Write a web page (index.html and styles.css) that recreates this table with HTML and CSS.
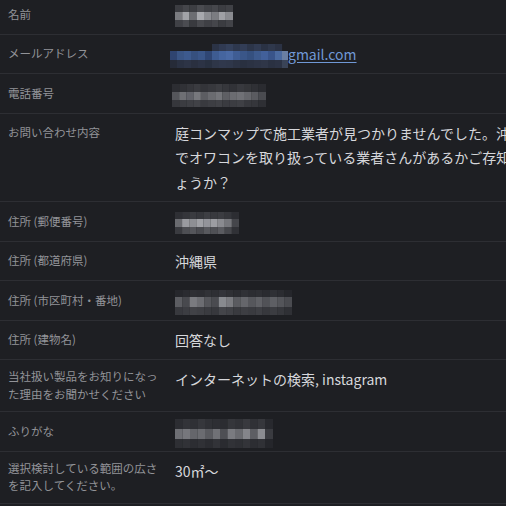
FILE: index.html
```html
<!DOCTYPE html>
<html lang="ja">
<head>
<meta charset="utf-8">
<title>お問い合わせ詳細</title>
<link rel="stylesheet" href="styles.css">
</head>
<body>
<main class="sheet">
  <div class="row">
    <div class="label">名前</div>
    <div class="value">
      <svg class="blur" width="58" height="22" viewBox="0 0 58 22">
        <g><rect x="0" y="0" width="7.3" height="7" fill="#3b3c41"/><rect x="7.25" y="0" width="7.3" height="7" fill="#45464b"/><rect x="14.5" y="0" width="7.3" height="7" fill="#3d3e43"/><rect x="21.75" y="0" width="7.3" height="7" fill="#4a4b50"/><rect x="29" y="0" width="7.3" height="7" fill="#414247"/><rect x="36.25" y="0" width="7.3" height="7" fill="#46474c"/><rect x="43.5" y="0" width="7.3" height="7" fill="#3c3d42"/><rect x="50.75" y="0" width="7.3" height="7" fill="#404146"/></g>
        <g><rect x="0" y="7" width="7.3" height="8" fill="#7a7b80"/><rect x="7.25" y="7" width="7.3" height="8" fill="#a2a3a8"/><rect x="14.5" y="7" width="7.3" height="8" fill="#6c6d72"/><rect x="21.75" y="7" width="7.3" height="8" fill="#a8a9ae"/><rect x="29" y="7" width="7.3" height="8" fill="#8c8d92"/><rect x="36.25" y="7" width="7.3" height="8" fill="#7b7c81"/><rect x="43.5" y="7" width="7.3" height="8" fill="#9fa0a5"/><rect x="50.75" y="7" width="7.3" height="8" fill="#8a8b90"/></g>
        <g><rect x="0" y="15" width="7.3" height="7" fill="#404146"/><rect x="7.25" y="15" width="7.3" height="7" fill="#4b4c51"/><rect x="14.5" y="15" width="7.3" height="7" fill="#393a3f"/><rect x="21.75" y="15" width="7.3" height="7" fill="#48494e"/><rect x="29" y="15" width="7.3" height="7" fill="#3f4045"/><rect x="36.25" y="15" width="7.3" height="7" fill="#45464b"/><rect x="43.5" y="15" width="7.3" height="7" fill="#3b3c41"/><rect x="50.75" y="15" width="7.3" height="7" fill="#424348"/></g>
      </svg>
    </div>
  </div>

  <div class="row">
    <div class="label">メールアドレス</div>
    <div class="value">
      <svg class="blur blur-left" width="118" height="24" viewBox="0 0 118 24">
        <g><rect x="42" y="0" width="7.1" height="7" fill="#2b3346"/><rect x="49" y="0" width="7.1" height="7" fill="#303a52"/><rect x="56" y="0" width="7.1" height="7" fill="#34405a"/><rect x="63" y="0" width="7.1" height="7" fill="#2e384e"/><rect x="70" y="0" width="7.1" height="7" fill="#323d56"/><rect x="77" y="0" width="7.1" height="7" fill="#2c3549"/><rect x="84" y="0" width="7.1" height="7" fill="#313b52"/><rect x="91" y="0" width="7.1" height="7" fill="#2a3244"/><rect x="98" y="0" width="7.1" height="7" fill="#2f384c"/><rect x="105" y="0" width="7.1" height="7" fill="#2b3244"/></g>
        <g><rect x="0" y="7" width="7.1" height="9" fill="#2f4470"/><rect x="7" y="7" width="7.1" height="9" fill="#3a5585"/><rect x="14" y="7" width="7.1" height="9" fill="#3d5a8e"/><rect x="21" y="7" width="7.1" height="9" fill="#36507f"/><rect x="28" y="7" width="7.1" height="9" fill="#3a5689"/><rect x="35" y="7" width="7.1" height="9" fill="#2f4674"/><rect x="42" y="7" width="7.1" height="9" fill="#3e5c92"/><rect x="49" y="7" width="7.1" height="9" fill="#45659f"/><rect x="56" y="7" width="7.1" height="9" fill="#4a6aa5"/><rect x="63" y="7" width="7.1" height="9" fill="#3f5d94"/><rect x="70" y="7" width="7.1" height="9" fill="#3a5688"/><rect x="77" y="7" width="7.1" height="9" fill="#35507f"/><rect x="84" y="7" width="7.1" height="9" fill="#3d5a8d"/><rect x="91" y="7" width="7.1" height="9" fill="#42609a"/><rect x="98" y="7" width="7.1" height="9" fill="#39548a"/><rect x="105" y="7" width="7.1" height="9" fill="#4b6aa0"/><rect x="112" y="7" width="6" height="9" fill="#6a7fa3"/></g>
        <g><rect x="0" y="16" width="7.1" height="8" fill="#262b38"/><rect x="7" y="16" width="7.1" height="8" fill="#2a3142"/><rect x="14" y="16" width="7.1" height="8" fill="#2d3446"/><rect x="21" y="16" width="7.1" height="8" fill="#2a3040"/><rect x="28" y="16" width="7.1" height="8" fill="#2c3345"/><rect x="35" y="16" width="7.1" height="8" fill="#283040"/><rect x="42" y="16" width="7.1" height="8" fill="#2e3648"/><rect x="49" y="16" width="7.1" height="8" fill="#30384c"/><rect x="56" y="16" width="7.1" height="8" fill="#2f374a"/><rect x="63" y="16" width="7.1" height="8" fill="#2c3344"/><rect x="70" y="16" width="7.1" height="8" fill="#293040"/><rect x="77" y="16" width="7.1" height="8" fill="#2b3243"/><rect x="84" y="16" width="7.1" height="8" fill="#2d3446"/><rect x="91" y="16" width="7.1" height="8" fill="#2f3648"/><rect x="98" y="16" width="7.1" height="8" fill="#2a3142"/><rect x="105" y="16" width="7.1" height="8" fill="#2c3345"/><rect x="112" y="16" width="6" height="8" fill="#3a4458"/></g>
      </svg><a class="link" href="#">gmail.com</a>
    </div>
  </div>

  <div class="row">
    <div class="label">電話番号</div>
    <div class="value">
      <svg class="blur blur-phone" width="94" height="23" viewBox="0 0 94 23">
        <g><rect x="0" y="0" width="7.3" height="8" fill="#2c2d32"/><rect x="7.2" y="0" width="7.3" height="8" fill="#303136"/><rect x="14.4" y="0" width="7.3" height="8" fill="#35363b"/><rect x="21.6" y="0" width="7.3" height="8" fill="#3a3b40"/><rect x="28.8" y="0" width="7.3" height="8" fill="#333439"/><rect x="36" y="0" width="7.3" height="8" fill="#37383d"/><rect x="43.2" y="0" width="7.3" height="8" fill="#3c3d42"/><rect x="50.4" y="0" width="7.3" height="8" fill="#36373c"/><rect x="57.6" y="0" width="7.3" height="8" fill="#313237"/><rect x="64.8" y="0" width="7.3" height="8" fill="#38393e"/><rect x="72" y="0" width="7.3" height="8" fill="#343539"/><rect x="79.2" y="0" width="7.3" height="8" fill="#2f3035"/><rect x="86.4" y="0" width="7.6" height="8" fill="#2a2b30"/></g>
        <g><rect x="0" y="8" width="7.3" height="8" fill="#55565b"/><rect x="7.2" y="8" width="7.3" height="8" fill="#6e6f74"/><rect x="14.4" y="8" width="7.3" height="8" fill="#62636a"/><rect x="21.6" y="8" width="7.3" height="8" fill="#77787d"/><rect x="28.8" y="8" width="7.3" height="8" fill="#5c5d62"/><rect x="36" y="8" width="7.3" height="8" fill="#6a6b70"/><rect x="43.2" y="8" width="7.3" height="8" fill="#74757a"/><rect x="50.4" y="8" width="7.3" height="8" fill="#5e5f64"/><rect x="57.6" y="8" width="7.3" height="8" fill="#6b6c71"/><rect x="64.8" y="8" width="7.3" height="8" fill="#707176"/><rect x="72" y="8" width="7.3" height="8" fill="#66676c"/><rect x="79.2" y="8" width="7.3" height="8" fill="#5a5b60"/><rect x="86.4" y="8" width="7.6" height="8" fill="#4a4b50"/></g>
        <g><rect x="0" y="16" width="7.3" height="7" fill="#36373c"/><rect x="7.2" y="16" width="7.3" height="7" fill="#3b3c41"/><rect x="14.4" y="16" width="7.3" height="7" fill="#3e3f44"/><rect x="21.6" y="16" width="7.3" height="7" fill="#414247"/><rect x="28.8" y="16" width="7.3" height="7" fill="#393a3f"/><rect x="36" y="16" width="7.3" height="7" fill="#3d3e43"/><rect x="43.2" y="16" width="7.3" height="7" fill="#404146"/><rect x="50.4" y="16" width="7.3" height="7" fill="#3a3b40"/><rect x="57.6" y="16" width="7.3" height="7" fill="#3c3d42"/><rect x="64.8" y="16" width="7.3" height="7" fill="#3f4045"/><rect x="72" y="16" width="7.3" height="7" fill="#37383d"/><rect x="79.2" y="16" width="7.3" height="7" fill="#35363b"/><rect x="86.4" y="16" width="7.6" height="7" fill="#2e2f34"/></g>
      </svg>
    </div>
  </div>

  <div class="row">
    <div class="label label-top">お問い合わせ内容</div>
    <div class="value">庭コンマップで施工業者が見つかりませんでした。沖縄県<br>でオワコンを取り扱っている業者さんがあるかご存知でし<br>ょうか？</div>
  </div>

  <div class="row">
    <div class="label">住所 (郵便番号)</div>
    <div class="value">
      <svg class="blur" width="64" height="22" viewBox="0 0 64 22">
        <g><rect x="0" y="0" width="7.2" height="7" fill="#2e2f34"/><rect x="7.1" y="0" width="7.2" height="7" fill="#34353a"/><rect x="14.2" y="0" width="7.2" height="7" fill="#3a3b40"/><rect x="21.3" y="0" width="7.2" height="7" fill="#36373c"/><rect x="28.4" y="0" width="7.2" height="7" fill="#3d3e43"/><rect x="35.5" y="0" width="7.2" height="7" fill="#38393e"/><rect x="42.6" y="0" width="7.2" height="7" fill="#3b3c41"/><rect x="49.7" y="0" width="7.2" height="7" fill="#35363b"/><rect x="56.8" y="0" width="7.2" height="7" fill="#2c2d32"/></g>
        <g><rect x="0" y="7" width="7.2" height="8" fill="#6a6b70"/><rect x="7.1" y="7" width="7.2" height="8" fill="#9a9ba0"/><rect x="14.2" y="7" width="7.2" height="8" fill="#8e8f94"/><rect x="21.3" y="7" width="7.2" height="8" fill="#a0a1a6"/><rect x="28.4" y="7" width="7.2" height="8" fill="#93949a"/><rect x="35.5" y="7" width="7.2" height="8" fill="#9c9da2"/><rect x="42.6" y="7" width="7.2" height="8" fill="#8a8b90"/><rect x="49.7" y="7" width="7.2" height="8" fill="#76777c"/><rect x="56.8" y="7" width="7.2" height="8" fill="#45464b"/></g>
        <g><rect x="0" y="15" width="7.2" height="7" fill="#3a3b40"/><rect x="7.1" y="15" width="7.2" height="7" fill="#4e4f54"/><rect x="14.2" y="15" width="7.2" height="7" fill="#55565b"/><rect x="21.3" y="15" width="7.2" height="7" fill="#4a4b50"/><rect x="28.4" y="15" width="7.2" height="7" fill="#58595e"/><rect x="35.5" y="15" width="7.2" height="7" fill="#4f5055"/><rect x="42.6" y="15" width="7.2" height="7" fill="#5a5b60"/><rect x="49.7" y="15" width="7.2" height="7" fill="#46474c"/><rect x="56.8" y="15" width="7.2" height="7" fill="#303136"/></g>
      </svg>
    </div>
  </div>

  <div class="row">
    <div class="label">住所 (都道府県)</div>
    <div class="value">沖縄県</div>
  </div>

  <div class="row">
    <div class="label">住所 (市区町村・番地)</div>
    <div class="value">
      <svg class="blur" width="117" height="25" viewBox="0 0 117 25">
        <g><rect x="0" y="0" width="7.4" height="7" fill="#26272c"/><rect x="7.3" y="0" width="7.4" height="7" fill="#2a2b30"/><rect x="14.6" y="0" width="7.4" height="7" fill="#2e2f34"/><rect x="21.9" y="0" width="7.4" height="7" fill="#2c2d32"/><rect x="29.2" y="0" width="7.4" height="7" fill="#313237"/><rect x="36.5" y="0" width="7.4" height="7" fill="#2e2f34"/><rect x="43.8" y="0" width="7.4" height="7" fill="#33343a"/><rect x="51.1" y="0" width="7.4" height="7" fill="#2f3035"/><rect x="58.4" y="0" width="7.4" height="7" fill="#2b2c31"/><rect x="65.7" y="0" width="7.4" height="7" fill="#303136"/><rect x="73" y="0" width="7.4" height="7" fill="#2c2d32"/><rect x="80.3" y="0" width="7.4" height="7" fill="#2e2f34"/><rect x="87.6" y="0" width="7.4" height="7" fill="#2a2b30"/><rect x="94.9" y="0" width="7.4" height="7" fill="#2f3035"/><rect x="102.2" y="0" width="7.4" height="7" fill="#2b2c31"/><rect x="109.5" y="0" width="7.5" height="7" fill="#25262b"/></g>
        <g><rect x="0" y="7" width="7.4" height="10" fill="#5c5d62"/><rect x="7.3" y="7" width="7.4" height="10" fill="#48494e"/><rect x="14.6" y="7" width="7.4" height="10" fill="#7a7b80"/><rect x="21.9" y="7" width="7.4" height="10" fill="#6c6d72"/><rect x="29.2" y="7" width="7.4" height="10" fill="#55565b"/><rect x="36.5" y="7" width="7.4" height="10" fill="#4a4b50"/><rect x="43.8" y="7" width="7.4" height="10" fill="#888a8f"/><rect x="51.1" y="7" width="7.4" height="10" fill="#7a7b80"/><rect x="58.4" y="7" width="7.4" height="10" fill="#5a5b60"/><rect x="65.7" y="7" width="7.4" height="10" fill="#65666b"/><rect x="73" y="7" width="7.4" height="10" fill="#56575c"/><rect x="80.3" y="7" width="7.4" height="10" fill="#606166"/><rect x="87.6" y="7" width="7.4" height="10" fill="#515257"/><rect x="94.9" y="7" width="7.4" height="10" fill="#5e5f64"/><rect x="102.2" y="7" width="7.4" height="10" fill="#54555a"/><rect x="109.5" y="7" width="7.5" height="10" fill="#4a4b50"/></g>
        <g><rect x="0" y="17" width="7.4" height="8" fill="#38393e"/><rect x="7.3" y="17" width="7.4" height="8" fill="#3c3d42"/><rect x="14.6" y="17" width="7.4" height="8" fill="#414247"/><rect x="21.9" y="17" width="7.4" height="8" fill="#3e3f44"/><rect x="29.2" y="17" width="7.4" height="8" fill="#3a3b40"/><rect x="36.5" y="17" width="7.4" height="8" fill="#37383d"/><rect x="43.8" y="17" width="7.4" height="8" fill="#44454a"/><rect x="51.1" y="17" width="7.4" height="8" fill="#404146"/><rect x="58.4" y="17" width="7.4" height="8" fill="#393a3f"/><rect x="65.7" y="17" width="7.4" height="8" fill="#3d3e43"/><rect x="73" y="17" width="7.4" height="8" fill="#3a3b40"/><rect x="80.3" y="17" width="7.4" height="8" fill="#3e3f44"/><rect x="87.6" y="17" width="7.4" height="8" fill="#37383d"/><rect x="94.9" y="17" width="7.4" height="8" fill="#3b3c41"/><rect x="102.2" y="17" width="7.4" height="8" fill="#36373c"/><rect x="109.5" y="17" width="7.5" height="8" fill="#2f3035"/></g>
      </svg>
    </div>
  </div>

  <div class="row">
    <div class="label">住所 (建物名)</div>
    <div class="value">回答なし</div>
  </div>

  <div class="row">
    <div class="label">当社扱い製品をお知りになった理由をお聞かせください</div>
    <div class="value">インターネットの検索, instagram</div>
  </div>

  <div class="row">
    <div class="label">ふりがな</div>
    <div class="value">
      <svg class="blur" width="98" height="29" viewBox="0 0 98 29">
        <g><rect x="0" y="0" width="7.6" height="10" fill="#2c2d32"/><rect x="7.5" y="0" width="7.6" height="10" fill="#323338"/><rect x="15" y="0" width="7.6" height="10" fill="#2f3035"/><rect x="22.5" y="0" width="7.6" height="10" fill="#36373c"/><rect x="30" y="0" width="7.6" height="10" fill="#303136"/><rect x="37.5" y="0" width="7.6" height="10" fill="#2d2e33"/><rect x="45" y="0" width="7.6" height="10" fill="#2b2c31"/><rect x="52.5" y="0" width="7.6" height="10" fill="#35363b"/><rect x="60" y="0" width="7.6" height="10" fill="#313237"/><rect x="67.5" y="0" width="7.6" height="10" fill="#38393e"/><rect x="75" y="0" width="7.6" height="10" fill="#303136"/><rect x="82.5" y="0" width="7.6" height="10" fill="#36373c"/><rect x="90" y="0" width="8" height="10" fill="#28292e"/></g>
        <g><rect x="0" y="10" width="7.6" height="10" fill="#6e6f74"/><rect x="7.5" y="10" width="7.6" height="10" fill="#76777c"/><rect x="15" y="10" width="7.6" height="10" fill="#65666b"/><rect x="22.5" y="10" width="7.6" height="10" fill="#6b6c71"/><rect x="30" y="10" width="7.6" height="10" fill="#5a5b60"/><rect x="37.5" y="10" width="7.6" height="10" fill="#707176"/><rect x="45" y="10" width="7.6" height="10" fill="#4e4f54"/><rect x="52.5" y="10" width="7.6" height="10" fill="#7a7b80"/><rect x="60" y="10" width="7.6" height="10" fill="#6a6b70"/><rect x="67.5" y="10" width="7.6" height="10" fill="#84858a"/><rect x="75" y="10" width="7.6" height="10" fill="#5d5e63"/><rect x="82.5" y="10" width="7.6" height="10" fill="#8b8c91"/><rect x="90" y="10" width="8" height="10" fill="#3a3b40"/></g>
        <g><rect x="0" y="20" width="7.6" height="9" fill="#2e2f34"/><rect x="7.5" y="20" width="7.6" height="9" fill="#313237"/><rect x="15" y="20" width="7.6" height="9" fill="#2c2d32"/><rect x="22.5" y="20" width="7.6" height="9" fill="#303136"/><rect x="30" y="20" width="7.6" height="9" fill="#2b2c31"/><rect x="37.5" y="20" width="7.6" height="9" fill="#323338"/><rect x="45" y="20" width="7.6" height="9" fill="#2a2b30"/><rect x="52.5" y="20" width="7.6" height="9" fill="#313237"/><rect x="60" y="20" width="7.6" height="9" fill="#2e2f34"/><rect x="67.5" y="20" width="7.6" height="9" fill="#333439"/><rect x="75" y="20" width="7.6" height="9" fill="#2c2d32"/><rect x="82.5" y="20" width="7.6" height="9" fill="#303136"/><rect x="90" y="20" width="8" height="9" fill="#25262b"/></g>
      </svg>
    </div>
  </div>

  <div class="row">
    <div class="label">選択検討している範囲の広さを記入してください。</div>
    <div class="value">30㎡～</div>
  </div>
</main>
</body>
</html>
```

FILE: styles.css
```css
html,
body {
  margin: 0;
  padding: 0;
  background: #1e1f23;
  overflow: hidden;
}

body {
  font-family: "Noto Sans CJK JP", "Noto Sans", sans-serif;
  width: 506px;
  height: 506px;
}

.sheet {
  margin-top: -5px;
}

.row {
  display: flex;
  align-items: flex-start;
  padding: 7px 0;
  border-bottom: 1px solid #2d2e33;
}

.label {
  flex: 0 0 152px;
  align-self: center;
  margin-left: 8px;
  margin-right: 15px;
  padding: 1px 0;
  font-size: 11.5px;
  line-height: 17.5px;
  color: #929398;
}

.label-top {
  align-self: flex-start;
  padding-top: 3px;
}

.value {
  flex: 0 0 auto;
  font-size: 14px;
  line-height: 24.5px;
  color: #d6d7db;
  white-space: nowrap;
}

.blur {
  vertical-align: middle;
  margin: -4px 0;
  filter: blur(0.6px);
}

.blur-left {
  margin-left: -5px;
}

.blur-phone {
  margin-left: -3px;
}

.link {
  color: #7098d6;
  text-decoration: underline;
  text-underline-offset: 2px;
}
```
